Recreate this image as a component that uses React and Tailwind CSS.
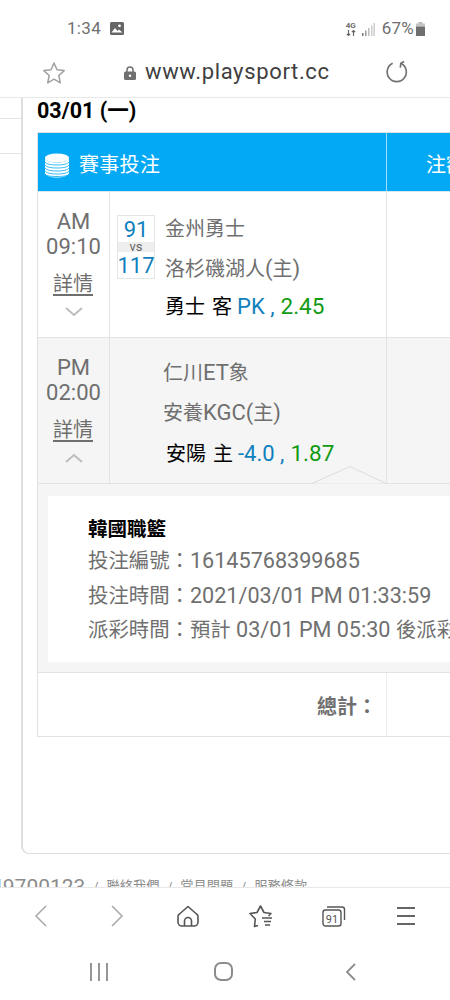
import React from "react";

const font = { fontFamily: '"Roboto","Noto Sans CJK TC",sans-serif' };

function Chips() {
  return (
    <svg width="26" height="25" viewBox="0 0 26 25" className="shrink-0">
      <ellipse cx="13" cy="5" rx="12" ry="4.5" fill="#fff" />
      <path d="M1 5v15c0 2.5 5.4 4.5 12 4.5s12-2 12-4.500V5c0 2.500-5.400 4.500-12 4.500S1 7.500 1 5z" fill="#fff" />
      <g fill="none" stroke="#03a9f4" strokeWidth="0.8">
        <path d="M1 9c1 2 6 3 12 3s11-1 12-3" />
        <path d="M1 12c1 2 6 3 12 3s11-1 12-3" />
        <path d="M1 15c1 2 6 3 12 3s11-1 12-3" />
        <path d="M1 18c1 2 6 3 12 3s11-1 12-3" />
        <path d="M1 21c1 2 6 2.500 12 2.500s11-.5 12-2.500" />
      </g>
    </svg>
  );
}

function TimeCell({ ap, time, up }) {
  return (
    <div className="w-[72px] shrink-0 flex flex-col items-center pt-[17px] border-r border-[#e3e3e3] text-[#6f6f6f]">
      <div className="text-[22px] leading-[25px]">{ap}</div>
      <div className="text-[22px] leading-[25px]">{time}</div>
      <div className="text-[20px] leading-[25px] underline underline-offset-[3px] mt-[13px] -ml-[1px]">詳情</div>
      <svg width="18" height="10" viewBox="0 0 18 10" className="mt-[10px]" fill="none" stroke="#bdbdbd" strokeWidth="2">
        <path d={up ? "M1 9l8-7 8 7" : "M1 1l8 7 8-7"} />
      </svg>
    </div>
  );
}

function Pick({ team, side, line, odds }) {
  return (
    <div className="flex items-baseline text-[20px] leading-[28px] whitespace-nowrap">
      <span className="text-black">{team}</span>
      <span className="text-black ml-[7px]">{side}</span>
      <span className="text-[#0f7fbd] ml-[5px] text-[22px]">{line} ,</span>
      <span className="text-[#139a13] ml-[6px] text-[22.5px]">{odds}</span>
    </div>
  );
}

function Row({ className, children }) {
  return <div className={`flex border-b border-[#e3e3e3] ${className}`}>{children}</div>;
}

function Cjk({ children }) {
  return <span className="text-[20px]">{children}</span>;
}

function Label({ children }) {
  return <span className="text-[20.4px]">{children}</span>;
}

export default function App() {
  return (
    <div style={font} className="w-[450px] h-[1000px] overflow-hidden bg-white flex flex-col">
      {/* status bar */}
      <div className="h-[48px] shrink-0 flex items-center pt-[10px] pl-[67px] pr-[25px] text-[#6f6f6f]">
        <span className="text-[17px] tracking-[0.3px]">1:34</span>
        <svg width="14" height="13" viewBox="0 0 14 13" className="ml-[9px] -mt-[2px]">
          <rect width="14" height="13" rx="1.500" fill="#666" />
          <circle cx="9.500" cy="3.800" r="1.400" fill="#fff" />
          <path d="M1.500 10.500l3.500-4.500 2.500 3 1.500-1.500 3.500 3z" fill="#fff" />
        </svg>
        <div className="flex-1" />
        <div className="flex flex-col items-center leading-none text-[8px] font-bold mr-[6px]">
          <span>4G</span>
          <svg width="10" height="6" viewBox="0 0 10 6" fill="none" stroke="#666" strokeWidth="1.200">
            <path d="M2.500 0v5.500M.8 3.800l1.700 1.700 1.700-1.700M7.500 6V.5M5.800 2.200L7.500.5l1.700 1.700" />
          </svg>
        </div>
        <svg width="13" height="13" viewBox="0 0 13 13" className="mr-[7px]">
          <rect x="0" y="10" width="1.500" height="3" fill="#777" />
          <rect x="3" y="7.500" width="1.500" height="5.500" fill="#999" />
          <rect x="6" y="5" width="1.500" height="8" fill="#bbb" />
          <rect x="9" y="2.500" width="1.500" height="10.500" fill="#ccc" />
          <rect x="11.500" y="0" width="1.500" height="13" fill="#ccc" />
        </svg>
        <span className="text-[17px] tracking-[0.2px]">67%</span>
        <svg width="9" height="14" viewBox="0 0 9 14" className="ml-[2px]">
          <rect x="2.500" width="4" height="2" fill="#bbb" />
          <rect y="1.500" width="9" height="3" fill="#c4c4c4" />
          <rect y="4.500" width="9" height="9.500" rx="0.500" fill="#6f6f6f" />
        </svg>
      </div>

      {/* url bar */}
      <div className="h-[50px] shrink-0 flex items-center border-b border-[#e8e8e8] relative">
        <svg width="24" height="24" viewBox="0 0 24 24" fill="none" stroke="#a0a0a0" strokeWidth="1.500" strokeLinejoin="round" className="ml-[42px]">
          <path d="M12 2l3 6.800 7.200.8-5.400 4.900 1.500 7.300L12 18.200 5.700 21.800l1.500-7.300L1.800 9.600 9 8.800z" />
        </svg>
        <svg width="12" height="14" viewBox="0 0 12 14" className="ml-[58px]">
          <path d="M3 6V4a3 3 0 016 0v2" fill="none" stroke="#707070" strokeWidth="1.500" />
          <rect y="5.500" width="12" height="8.500" rx="1.500" fill="#707070" />
          <circle cx="6" cy="9.700" r="1.200" fill="#fff" />
        </svg>
        <span className="ml-[9px] -mt-[2px] text-[22px] text-[#404040] tracking-[0.65px] leading-none">www.playsport.cc</span>
        <svg width="23" height="23" viewBox="0 0 24 24" fill="none" stroke="#707070" strokeWidth="1.700" className="ml-[55px] -mt-[3px]">
          <path d="M8 3.500A10 10 0 1016.500 3.500" />
          <path d="M20 1.500L16.500 3.500l-.5 4.500" />
        </svg>
      </div>

      {/* page */}
      <div className="h-[756px] shrink-0 flex">
        <div className="w-[21px] shrink-0 flex flex-col">
          <div className="h-[21px] border-b border-[#e3e3e3]" />
          <div className="h-[35px] border-b border-[#e3e3e3]" />
        </div>
        <div className="w-[429px] shrink-0 border-l-2 border-b border-[#dedede] rounded-bl-[8px] pl-[14px] flex flex-col overflow-hidden">
          <div className="h-[34px] shrink-0 text-[21.5px] leading-[26px] font-bold text-black">03/01 (一)</div>
          <div className="w-[500px] border-l border-t border-[#e0e0e0]">
            {/* header */}
            <div className="h-[59px] flex bg-[#03a9f4] text-white border-b border-[#d8e8f0]">
              <div className="w-[349px] shrink-0 flex items-center pl-[6px] pt-[6px] border-r border-[#a5dcf7]">
                <Chips />
                <span className="ml-[9px] text-[20px] tracking-[0.3px]">賽事投注</span>
              </div>
              <div className="pl-[39px] pt-[6px] flex items-center text-[20px]">注額</div>
            </div>

            {/* row 1 */}
            <Row className="h-[146px]">
              <TimeCell ap="AM" time="09:10" />
              <div className="w-[277px] shrink-0 border-r border-[#e3e3e3] pt-[23px] pl-[7px] flex">
                <div className="w-[38px] h-[64px] shrink-0 border border-[#e5e5e5] flex flex-col items-center text-[#0f7fbd] text-[22px]">
                  <div className="h-[26px] leading-[28px]">91</div>
                  <div className="h-[10px] w-full bg-[#eeeeee] text-[#666] text-[13px] leading-[10px] text-center">vs</div>
                  <div className="h-[26px] leading-[27px] whitespace-nowrap">117</div>
                </div>
                <div className="ml-[10px] -mt-[6px] flex flex-col text-[22px] text-[#6f6f6f] whitespace-nowrap">
                  <div className="leading-[39px]"><Cjk>金州勇士</Cjk></div>
                  <div className="leading-[39px]"><Cjk>洛杉磯湖人</Cjk>(<Cjk>主</Cjk>)</div>
                  <div className="mt-[3px]"><Pick team="勇士" side="客" line="PK" odds="2.45" /></div>
                </div>
              </div>
              <div className="flex-1" />
            </Row>

            {/* row 2 */}
            <Row className="h-[146px] bg-[#f5f5f5] relative">
              <TimeCell ap="PM" time="02:00" up />
              <div className="w-[277px] shrink-0 border-r border-[#e3e3e3] pt-[15px] pl-[53px] text-[22px] text-[#6f6f6f] whitespace-nowrap">
                <div className="leading-[40px]"><Cjk>仁川</Cjk>ET<Cjk>象</Cjk></div>
                <div className="leading-[40px]"><Cjk>安養</Cjk>KGC(<Cjk>主</Cjk>)</div>
                <div className="mt-[6px] ml-[3px]"><Pick team="安陽" side="主" line="-4.0" odds="1.87" /></div>
              </div>
              <div className="flex-1" />
              <svg width="76" height="18" viewBox="0 0 76 18" className="absolute left-[274px] -bottom-[1px]">
                <path d="M0 17.500L38 .5 74 17.500" fill="#f5f5f5" stroke="#dcdcdc" strokeWidth="1" />
              </svg>
            </Row>

            {/* detail */}
            <div className="h-[189px] bg-[#f5f5f5] pt-[12px] pl-[10px] border-b border-[#e3e3e3]">
              <div className="h-[166px] bg-white pt-[20px] pl-[40px] text-[#6f6f6f] text-[21.6px] leading-[33.500px] whitespace-nowrap">
                <div className="font-bold text-black text-[19.500px] leading-[28px]">韓國職籃</div>
                <div><Label>投注編號：</Label>16145768399685</div>
                <div><Label>投注時間：</Label>2021/03/01 PM 01:33:59</div>
                <div><Label>派彩時間：預計</Label> 03/01 PM 05:30 <Label>後派彩</Label></div>
              </div>
            </div>

            {/* total */}
            <div className="h-[64px] flex border-b border-[#e3e3e3]">
              <div className="w-[349px] shrink-0 border-r border-[#eeeeee] flex items-center justify-end pr-[9px] pt-[4px] text-[20px] font-bold text-[#6f6f6f]">
                總計：
              </div>
            </div>
          </div>
        </div>
      </div>

      {/* footer peek */}
      <div className="h-[33px] shrink-0 overflow-hidden flex items-start pt-[21px] text-[#8c8c8c] whitespace-nowrap">
        <span className="-ml-[9px] text-[21px] leading-[24px]">49700123</span>
        <span className="ml-[8px] text-[12px] leading-[24px]">/</span>
        <span className="ml-[8px] text-[13.250px] leading-[24px]">聯絡我們</span>
        <span className="ml-[8px] text-[12px] leading-[24px]">/</span>
        <span className="ml-[8px] text-[13.250px] leading-[24px]">常見問題</span>
        <span className="ml-[8px] text-[12px] leading-[24px]">/</span>
        <span className="ml-[8px] text-[13.250px] leading-[24px]">服務條款</span>
      </div>

      {/* browser nav */}
      <div className="h-[58px] shrink-0 border-t border-[#e8e8e8] relative flex items-center">
        <svg width="14" height="24" viewBox="0 0 14 24" fill="none" stroke="#a8a8a8" strokeWidth="1.500" className="ml-[34px] -mt-[2px]"><path d="M12 2L2 12l10 10" /></svg>
        <svg width="14" height="24" viewBox="0 0 14 24" fill="none" stroke="#a8a8a8" strokeWidth="1.500" className="ml-[62px] -mt-[2px]"><path d="M2 2l10 10L2 22" /></svg>
        <svg width="22" height="22" viewBox="0 0 22 22" fill="none" stroke="#555" strokeWidth="1.600" strokeLinejoin="round" className="ml-[53px] -mt-[2px]">
          <path d="M11 1.500L2.500 9A3 3 0 001 11.500V17a4 4 0 004 4h12a4 4 0 004-4v-5.500A3 3 0 0019.500 9z" />
          <path d="M7.500 21v-5a3.500 3.500 0 017 0v5" />
        </svg>
        <svg width="24" height="24" viewBox="0 0 24 24" fill="none" stroke="#555" strokeWidth="1.600" strokeLinejoin="round" className="ml-[50px] -mt-[2px]">
          <path d="M9 21.500l-3.500 1 .8-7.500L1 9.500l7-1L11.500 2l3.500 6.500 7 1-2.500 2.500" />
          <path d="M13 14h10M15 17.500h7M16 21h5" />
        </svg>
        <svg width="24" height="22" viewBox="0 0 24 22" fill="none" stroke="#555" strokeWidth="1.400" className="ml-[49px] -mt-[2px]">
          <rect x="1" y="5" width="18" height="16" rx="2.500" />
          <path d="M5 2h15a2.500 2.500 0 012.500 2.500V15" />
          <text x="10" y="17.500" textAnchor="middle" fontSize="11" fontFamily="Roboto" fill="#555" stroke="none">91</text>
        </svg>
        <svg width="20" height="20" viewBox="0 0 20 20" stroke="#666" strokeWidth="1.800" className="ml-[50px] -mt-[2px]">
          <path d="M1 2h18M1 10h18M1 18h18" />
        </svg>
      </div>

      {/* system nav */}
      <div className="flex-1 relative flex items-center pb-[2px]">
        <svg width="18" height="18" viewBox="0 0 18 18" stroke="#8c8c8c" strokeWidth="1.800" className="ml-[90px]"><path d="M1 0v18M9 0v18M17 0v18" /></svg>
        <svg width="19" height="19" viewBox="0 0 19 19" fill="none" stroke="#8c8c8c" strokeWidth="2" className="ml-[106px]"><rect x="1" y="1" width="17" height="17" rx="6" /></svg>
        <svg width="11" height="18" viewBox="0 0 11 18" fill="none" stroke="#8c8c8c" strokeWidth="1.800" className="ml-[112px]"><path d="M10 1L2 9l8 8" /></svg>
      </div>
    </div>
  );
}
